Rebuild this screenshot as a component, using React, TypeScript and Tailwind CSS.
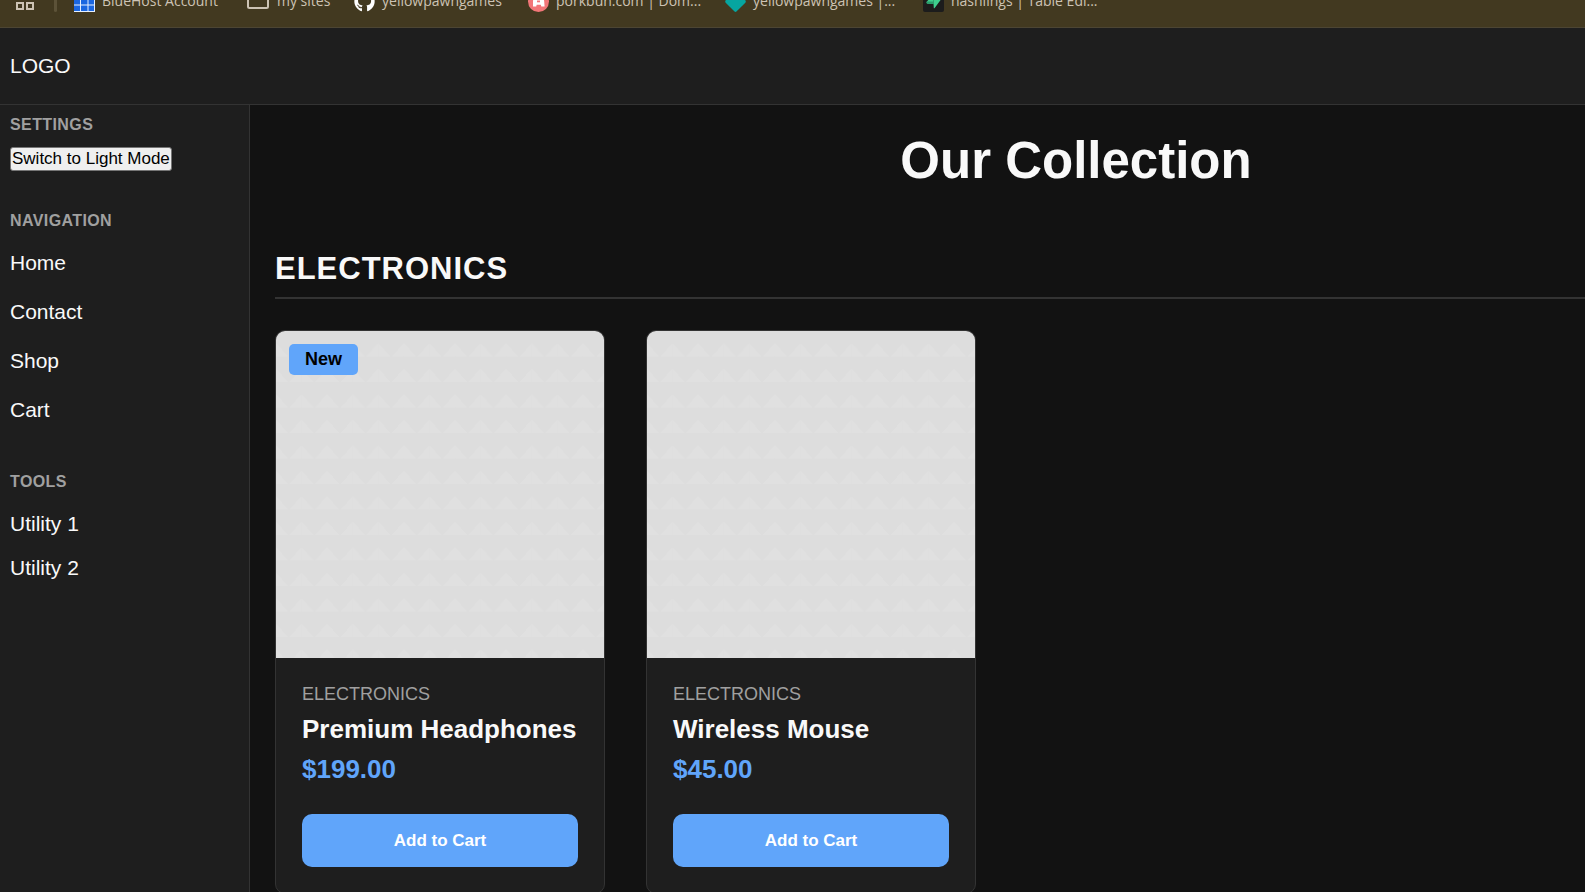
import type { ReactNode } from "react";
import { FaGithub } from "react-icons/fa";

type Bookmark = { label: string; icon: ReactNode; width: string };
type Product = { name: string; category: string; price: string; badge?: string };

const GridSitesIcon = () => (
  <svg width="21" height="21" viewBox="0 0 21 21" aria-hidden="true">
    <rect width="21" height="21" fill="#1a66e0" />
    <path d="M6.500 0v21M14 0v21M0 6.500h21M0 14h21M0 20.500h21M20.500 0v21" stroke="#e6f0ff" strokeWidth="1" />
  </svg>
);

const FolderIcon = () => (
  <svg width="23" height="21" viewBox="0 0 23 21" fill="none" aria-hidden="true">
    <path
      d="M1 4.500a2 2 0 0 1 2-2h5l2.500 3H19a2 2 0 0 1 2 2v8a1.500 1.500 0 0 1-1.500 1.500h-17A1.500 1.500 0 0 1 1 15.500z"
      stroke="#cdc3b4"
      strokeWidth="2"
    />
  </svg>
);

const PigIcon = () => (
  <svg width="21" height="21" viewBox="0 0 21 21" aria-hidden="true">
    <circle cx="10.5" cy="10.5" r="10.5" fill="#f27678" />
    <path
      d="M5 15.500v-5C5 7 7.300 4.500 10.500 4.500S16 7 16.200 10.500l.4 5h-3.300l-.5-1.800H8.700l-.5 1.800z"
      fill="#fff"
    />
    <path d="M9 9.500h3v1.800H9z" fill="#f27678" />
  </svg>
);

const DiamondIcon = () => (
  <svg width="21" height="21" viewBox="0 0 21 21" aria-hidden="true">
    <path
      d="M9.300 .7a1.700 1.700 0 0 1 2.400 0l8.400 8.400a2 2 0 0 1 0 2.800l-8.400 8.400a1.700 1.700 0 0 1-2.400 0L.9 11.900a2 2 0 0 1 0-2.800z"
      fill="#06a5a0"
    />
  </svg>
);

const BoltIcon = () => (
  <svg width="21" height="21" viewBox="0 0 21 21" aria-hidden="true">
    <rect width="21" height="21" rx="2" fill="#1c1c1c" />
    <path d="M10.500 3v9.500H4.500c-.9 0-1.300-1-.8-1.700z" fill="#3ecf8e" />
    <path d="M11.500 17.200c-.1.300-.7.200-.7-.2l-.3-4.500V7.500h6c1 0 1.500 1 .9 1.700z" fill="#3ecf8e" />
    <path d="M4 10.500h7v2.500H5c-1 0-1.600-1.500-1-2.500z" fill="#2a9d6c" />
  </svg>
);

const bookmarks: Bookmark[] = [
  { label: "BlueHost Account", icon: <GridSitesIcon />, width: "w-[173px]" },
  { label: "my sites", icon: <FolderIcon />, width: "w-[107px]" },
  { label: "yellowpawngames", icon: <FaGithub size={21} color="#fff" />, width: "w-[174px]" },
  { label: "porkbun.com | Dom...", icon: <PigIcon />, width: "w-[197px]" },
  { label: "yellowpawngames |...", icon: <DiamondIcon />, width: "w-[198px]" },
  { label: "hashlings | Table Edi...", icon: <BoltIcon />, width: "w-[197px]" },
];

const products: Product[] = [
  { name: "Premium Headphones", category: "ELECTRONICS", price: "$199.00", badge: "New" },
  { name: "Wireless Mouse", category: "ELECTRONICS", price: "$45.00" },
];

function BookmarksBar() {
  return (
    <nav
      aria-label="Bookmarks"
      className="h-7 shrink-0 overflow-hidden border-b border-[#4c4533] bg-[#423920] font-['Open_Sans',sans-serif] text-[14px] leading-[19px] text-[#cdc3b4]"
    >
      <div className="-mt-[9px] flex items-center pl-[15px]">
        <svg width="20" height="21" viewBox="0 0 20 21" fill="none" stroke="#cdc3b4" strokeWidth="2" aria-hidden="true">
          <path d="M2 2h6v6H2zM12 2h6v6h-6zM2 12h6v6H2zM12 12h6v6h-6z" />
        </svg>
        <span className="mr-[17px] ml-[19px] h-[21px] w-[3px] rounded-full bg-[#5c5238]" />
        {bookmarks.map((b) => (
          <a key={b.label} href="#" className={`flex shrink-0 items-start gap-[7px] whitespace-nowrap ${b.width}`}>
            {b.icon}
            {b.label}
          </a>
        ))}
      </div>
    </nav>
  );
}

function SideHeading({ children }: { children: ReactNode }) {
  return <h3 className="text-[16px] leading-6 font-bold tracking-wide text-[#a0a0a0]">{children}</h3>;
}

function Sidebar() {
  return (
    <aside className="w-[250px] shrink-0 border-r border-[#333] bg-[#1e1e1e] px-[10px] pt-2">
      <section>
        <SideHeading>SETTINGS</SideHeading>
        <button
          type="button"
          className="mt-[10px] block h-6 rounded-[3px] border border-[#767676] bg-[#efefef] px-px text-[17px] leading-5 whitespace-nowrap text-black"
        >
          Switch to Light Mode
        </button>
      </section>
      <section className="mt-[38px]">
        <SideHeading>NAVIGATION</SideHeading>
        <ul className="mt-[13px] flex flex-col gap-4">
          {["Home", "Contact", "Shop", "Cart"].map((t) => (
            <li key={t}>
              <a href="#" className="block">{t}</a>
            </li>
          ))}
        </ul>
      </section>
      <section className="mt-11">
        <SideHeading>TOOLS</SideHeading>
        <ul className="mt-[13px] flex flex-col gap-[11px]">
          {["Utility 1", "Utility 2"].map((t) => (
            <li key={t}>
              <a href="#" className="block">{t}</a>
            </li>
          ))}
        </ul>
      </section>
    </aside>
  );
}

function ProductCard({ product }: { product: Product }) {
  return (
    <article className="overflow-hidden rounded-[10px] border border-[#333] bg-[#1e1e1e]">
      <div className="relative h-[327px] bg-[#ddd] bg-[linear-gradient(45deg,#e0e0e0_25%,transparent_25%),linear-gradient(-45deg,#e0e0e0_25%,transparent_25%)] bg-size-[7.8%_7.8%]">
        {product.badge && (
          <span className="absolute top-[13px] left-[13px] rounded-[5px] bg-[#60a5fa] px-4 py-[5px] text-[18px] leading-[21px] font-bold text-black">
            {product.badge}
          </span>
        )}
      </div>
      <div className="p-[26px]">
        <p className="text-[18px] leading-5 text-[#a0a0a0]">{product.category}</p>
        <h3 className="mt-[10px] text-[26px] leading-[30px] font-bold whitespace-nowrap">{product.name}</h3>
        <p className="mt-[10px] text-[26px] leading-[30px] font-bold text-[#60a5fa]">{product.price}</p>
        <button
          type="button"
          className="mt-[30px] block h-[53px] w-full rounded-[10px] bg-[#60a5fa] text-[17px] font-bold text-white"
        >
          Add to Cart
        </button>
      </div>
    </article>
  );
}

export default function App() {
  return (
    <div className="flex h-screen flex-col overflow-hidden bg-[#121212] font-['Liberation_Sans',Arial,sans-serif] text-[21px] leading-[33px] text-[#f9f9f9]">
      <BookmarksBar />
      <header className="shrink-0 border-b border-[#333] bg-[#1e1e1e] px-[10px] pt-[21px] pb-[22px]">
        <a href="#" className="block">LOGO</a>
      </header>
      <div className="flex min-h-0 w-[120%] flex-1">
        <Sidebar />
        <main className="min-w-0 flex-1 overflow-y-auto px-[25px] pt-[27px] [scrollbar-width:none]">
          <h1 className="text-center text-[51px] leading-[58px] font-bold">Our Collection</h1>
          <section className="mt-[61px]">
            <h2 className="border-b-2 border-[#333] pb-[10px] text-[31px] leading-9 font-bold tracking-[1px]">
              ELECTRONICS
            </h2>
            <div className="mt-[31px] grid grid-cols-[repeat(auto-fill,330px)] gap-[41px]">
              {products.map((p) => (
                <ProductCard key={p.name} product={p} />
              ))}
            </div>
          </section>
        </main>
      </div>
    </div>
  );
}
